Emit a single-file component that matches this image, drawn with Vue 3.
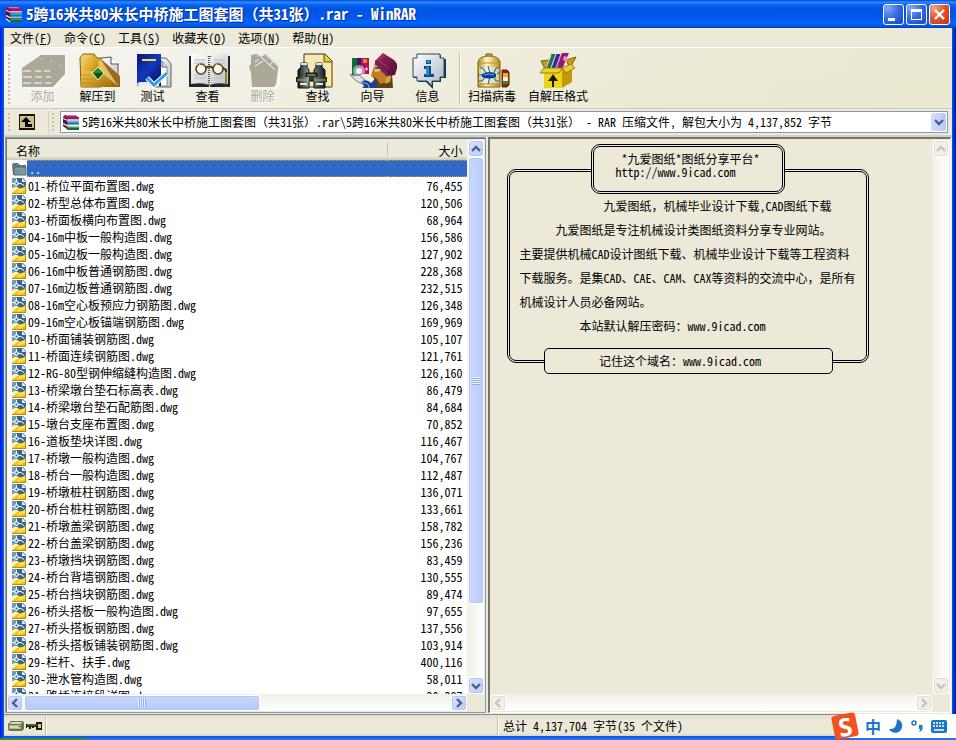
<script setup>
import { ref } from 'vue'

const menus = [
  { text: '文件', key: 'F' },
  { text: '命令', key: 'C' },
  { text: '工具', key: 'S' },
  { text: '收藏夹', key: 'O' },
  { text: '选项', key: 'N' },
  { text: '帮助', key: 'H' },
]

const files = [
  ['01-桥位平面布置图.dwg', '76,455'],
  ['02-桥型总体布置图.dwg', '120,506'],
  ['03-桥面板横向布置图.dwg', '68,964'],
  ['04-16m中板一般构造图.dwg', '156,586'],
  ['05-16m边板一般构造图.dwg', '127,902'],
  ['06-16m中板普通钢筋图.dwg', '228,368'],
  ['07-16m边板普通钢筋图.dwg', '232,515'],
  ['08-16m空心板预应力钢筋图.dwg', '126,348'],
  ['09-16m空心板锚端钢筋图.dwg', '169,969'],
  ['10-桥面铺装钢筋图.dwg', '105,107'],
  ['11-桥面连续钢筋图.dwg', '121,761'],
  ['12-RG-80型钢伸缩缝构造图.dwg', '126,160'],
  ['13-桥梁墩台垫石标高表.dwg', '86,479'],
  ['14-桥梁墩台垫石配筋图.dwg', '84,684'],
  ['15-墩台支座布置图.dwg', '70,852'],
  ['16-道板垫块详图.dwg', '116,467'],
  ['17-桥墩一般构造图.dwg', '104,767'],
  ['18-桥台一般构造图.dwg', '112,487'],
  ['19-桥墩桩柱钢筋图.dwg', '136,071'],
  ['20-桥台桩柱钢筋图.dwg', '133,661'],
  ['21-桥墩盖梁钢筋图.dwg', '158,782'],
  ['22-桥台盖梁钢筋图.dwg', '156,236'],
  ['23-桥墩挡块钢筋图.dwg', '83,459'],
  ['24-桥台背墙钢筋图.dwg', '130,555'],
  ['25-桥台挡块钢筋图.dwg', '89,474'],
  ['26-桥头搭板一般构造图.dwg', '97,655'],
  ['27-桥头搭板钢筋图.dwg', '137,556'],
  ['28-桥头搭板铺装钢筋图.dwg', '103,914'],
  ['29-栏杆、扶手.dwg', '400,116'],
  ['30-泄水管构造图.dwg', '58,011'],
  ['31-路桥连接段详图.dwg', '20,287'],
]

const selected = ref(-1)
const address = '5跨16米共80米长中桥施工图套图（共31张）.rar\\5跨16米共80米长中桥施工图套图（共31张） - RAR 压缩文件, 解包大小为 4,137,852 字节'
</script>

<template>
  <div class="desktop">
    <svg class="defs" width="0" height="0" aria-hidden="true">
      <defs>
        <linearGradient id="gold" x1="0" y1="0" x2="1" y2="1">
          <stop offset="0" stop-color="#f7e08a" /><stop offset=".45" stop-color="#dba92b" /><stop offset="1" stop-color="#8a5c06" />
        </linearGradient>
        <linearGradient id="blue" x1="0" y1="0" x2="1" y2="1">
          <stop offset="0" stop-color="#0a1470" /><stop offset=".5" stop-color="#1238c0" /><stop offset="1" stop-color="#04105c" />
        </linearGradient>
        <linearGradient id="paper" x1="0" y1="0" x2="1" y2="1">
          <stop offset="0" stop-color="#ffffff" /><stop offset="1" stop-color="#bfc2c8" />
        </linearGradient>
        <linearGradient id="barrel" x1="0" y1="0" x2="1" y2="0">
          <stop offset="0" stop-color="#0c1414" /><stop offset=".4" stop-color="#8fa5a8" /><stop offset="1" stop-color="#152020" />
        </linearGradient>
        <linearGradient id="tank" x1="0" y1="0" x2="1" y2="0">
          <stop offset="0" stop-color="#b58a10" /><stop offset=".4" stop-color="#fffac8" /><stop offset="1" stop-color="#b98b10" />
        </linearGradient>
        <linearGradient id="bubble" x1="0" y1="0" x2="1" y2="1">
          <stop offset="0" stop-color="#ffffff" /><stop offset="1" stop-color="#a9b6c4" />
        </linearGradient>
        <linearGradient id="hat" x1="0" y1="0" x2="1" y2="1">
          <stop offset="0" stop-color="#a02a62" /><stop offset="1" stop-color="#4c0a35" />
        </linearGradient>
        <symbol id="books" viewBox="0 0 16 16">
          <path d="M1 1h10l4 2v3H4L1 4z" fill="#a5125f" />
          <path d="M1 1h10l3 1H4z" fill="#e66bb0" />
          <path d="M2 4l2 1h11v1H4z" fill="#e8e8e8" />
          <path d="M1 6l3 1h11v3H4L1 9z" fill="#1572b0" />
          <path d="M4 7h11v1H4z" fill="#53c8ea" />
          <path d="M2 9l2 1h11v1H4z" fill="#e8e8e8" />
          <path d="M1 11l3 1h11v3H4l-3-2z" fill="#176a2a" />
          <path d="M4 12h11v1H4z" fill="#53b04f" />
          <path d="M0 2l4 2v11l-4-3z" fill="#5a1038" />
          <path d="M0 4l4 2M0 9l4 2M0 12l4 3" stroke="#fff" />
        </symbol>
        <symbol id="dwg" viewBox="0 0 14 16">
          <path d="M0 0h11l3 3v13H0z" fill="#39678e" />
          <path d="M0 0h5v9H0z" fill="#6f9cbc" />
          <path d="M10 0l4 4h-4z" fill="#dff0fa" />
          <path d="M0 10q4-2 7 0t7-3v9H0z" fill="#f3bf17" />
          <path d="M0 10q4-2 7 0l-3 2-4 3z" fill="#fff2b0" />
          <path d="M7 11l7-2v3l-9 3z" fill="#ffe14a" />
          <path d="M0 15h14v1H0zM13 8h1v8h-1z" fill="#c28a0a" />
          <path d="M4.500 1v7M0 5.500h9l3 2" stroke="#fff" fill="none" />
          <path d="M3 4h3v3H3z" fill="#39678e" stroke="#fff" />
        </symbol>
        <symbol id="up" viewBox="0 0 10 10"><path d="M1 7l4-4 4 4" fill="none" stroke="currentColor" stroke-width="2.4" /></symbol>
        <symbol id="down" viewBox="0 0 10 10"><path d="M1 3l4 4 4-4" fill="none" stroke="currentColor" stroke-width="2.4" /></symbol>
        <symbol id="left" viewBox="0 0 10 10"><path d="M7 1L3 5l4 4" fill="none" stroke="currentColor" stroke-width="2.4" /></symbol>
        <symbol id="right" viewBox="0 0 10 10"><path d="M3 1l4 4-4 4" fill="none" stroke="currentColor" stroke-width="2.4" /></symbol>
      </defs>
    </svg>

    <main class="window">
      <header class="titlebar">
        <svg class="app-icon" width="17" height="17"><use href="#books" /></svg>
        <h1>5跨16米共80米长中桥施工图套图（共31张）.rar - WinRAR</h1>
        <div class="caption-buttons">
          <button aria-label="最小化"><svg width="19" height="19"><path d="M4 13h7v3H4z" fill="#fff" /></svg></button>
          <button aria-label="最大化"><svg width="19" height="19"><path d="M4 4h11v11H4zM5 7v7h9V7z" fill="#fff" fill-rule="evenodd" /></svg></button>
          <button class="close" aria-label="关闭"><svg width="19" height="19"><path d="M5 5l9 9M14 5l-9 9" stroke="#fff" stroke-width="2.4" /></svg></button>
        </div>
      </header>

      <nav class="menubar">
        <button v-for="m in menus" :key="m.key">{{ m.text }}(<u>{{ m.key }}</u>)</button>
      </nav>

      <div class="toolbar">
        <span class="grip"></span>
        <button class="tool" disabled>
          <svg width="48" height="36" viewBox="0 0 48 36">
            <path d="M4 35h31l12-13V3" fill="none" stroke="#fff" />
            <path d="M3 15L22 2h24v19L34 34H3z" fill="#aca899" />
            <path d="M4 18h8M16 18h6M25 18h6M4 24h9M16 24h7M27 24h5M4 30h8M15 30h8M26 30h6" stroke="#fff" />
            <path d="M22 6h1M32 8h1M41 13h1" stroke="#fff" />
          </svg>
          <span>添加</span>
        </button>
        <button class="tool">
          <svg width="48" height="36" viewBox="0 0 48 36">
            <path d="M27 5l10-1 7 7v21H27z" fill="url(#paper)" stroke="#555" />
            <path d="M37 4v7h8" fill="#fff" stroke="#555" />
            <path d="M6 5l3-4h11l3 4h4v29H7z" fill="url(#gold)" stroke="#8a5c06" />
            <path d="M24 7L46 25v9H7V18h17z" fill="url(#gold)" />
            <path d="M26 5L46 23 45 34 29 18z" fill="#9a6b1a" />
            <path d="M26 5v13l18 15z" fill="#f0d283" opacity=".8" />
            <path d="M7 22h10M7 26h15M7 30h24" stroke="#c08a1c" opacity=".7" />
            <path d="M24 14l6 6-6 7-6-7z" fill="#2d8f2a" stroke="#f2f0b8" />
            <path d="M20 20h9l-5 6z" fill="#0c5313" />
          </svg>
          <span>解压到</span>
        </button>
        <button class="tool">
          <svg width="48" height="36" viewBox="0 0 48 36">
            <path d="M25 5h12l5 6v23H25z" fill="url(#paper)" stroke="#666" />
            <path d="M24 8h9l5 6v19H24z" fill="#fff" stroke="#8a8a8a" />
            <path d="M33 8v6h5" fill="#d5d8de" stroke="#666" />
            <path d="M8 1h24v32H10q-2 0-2-2z" fill="url(#blue)" />
            <path d="M8 31q1-2 4-2h18v4H10z" fill="#e8ebf2" />
            <path d="M8 1h24v28H8z" fill="url(#blue)" />
            <path d="M13 7h14" stroke="#f2dc3a" stroke-width="2" />
            <path d="M18 25l7 7 13-12" fill="none" stroke="#fff" stroke-width="5" />
            <path d="M18 25l7 7 13-12" fill="none" stroke="#2b9be8" stroke-width="3" />
          </svg>
          <span>测试</span>
        </button>
        <button class="tool">
          <svg width="48" height="36" viewBox="0 0 48 36">
            <path d="M5 3h20v31H5zM26 3h20v31H26z" fill="#262626" />
            <path d="M7 1q12-1 18 3v28q-6-3-18-1zM44 1q-12-1-18 3v28q6-3 18-1z" fill="url(#paper)" />
            <path d="M25 3v30" stroke="#555" stroke-dasharray="1 1" stroke-width="2" />
            <path d="M10 7h11M10 10h11M30 7h11M30 10h11M10 22h11M30 22h9M10 25h11M30 25h9" stroke="#b8b8bc" />
            <circle cx="17" cy="16" r="5" fill="#f7f7f7" stroke="#5b4508" stroke-width="1.600" />
            <circle cx="34" cy="16" r="5" fill="#f7f7f7" stroke="#5b4508" stroke-width="1.600" />
            <path d="M22 15q3-3 7 0M39 15l3 2v17" fill="none" stroke="#4b3604" stroke-width="2" />
            <path d="M14 13l2-2M31 13l2-2M42 19v12" stroke="#ecc94a" />
          </svg>
          <span>查看</span>
        </button>
        <button class="tool" disabled>
          <svg width="48" height="36" viewBox="0 0 48 36">
            <path d="M38 35H13M40 16v16l-3 3" stroke="#fff" fill="none" />
            <path d="M10 14l2-3V2l6-1 4 3 5-3 12 11v5l-2 14-2 3H13l-1-14z" fill="#aca899" />
            <path d="M22 4l14 13M27 2l12 11M16 9l4-3M16 13l8-5M18 3h1M31 12l3-4" stroke="#fff" />
          </svg>
          <span>删除</span>
        </button>
        <button class="tool">
          <svg width="48" height="36" viewBox="0 0 48 36">
            <path d="M10 1h21l7 7v26H10z" fill="#f8e8b8" stroke="#3a3016" />
            <path d="M30 1v8h8" fill="#e6cf1d" stroke="#5a4a10" />
            <path d="M38 34V13" stroke="#b79338" stroke-width="2" />
            <path d="M7 10h6v4l2 3v18H4V17l3-3zM22 10h6v4l3 3v18H20V17l2-3z" fill="url(#barrel)" stroke="#0b0f0f" />
            <path d="M12 20h11v8H12z" fill="#26393b" stroke="#0b0f0f" />
            <path d="M2 24h13v5H2zM20 24h13v5H20z" fill="url(#barrel)" />
            <path d="M3 27h12M20 27h12M13 22h8" stroke="#d8aa24" />
            <path d="M7 11h6M22 11h6M6 31h7M22 31h7" stroke="#dfe8e8" stroke-width="2" />
          </svg>
          <span>查找</span>
        </button>
        <button class="tool">
          <svg width="48" height="36" viewBox="0 0 48 36">
            <path d="M3 5h6v17H3z" fill="#106c38" /><path d="M8 5h5v17H8z" fill="#4a1072" /><path d="M12 5h8v16h-8z" fill="#b51252" />
            <path d="M14 6h4v4h-4z" fill="#dc8a28" />
            <circle cx="10" cy="18" r="6" fill="#fff" opacity=".5" />
            <circle cx="10" cy="18" r="3" fill="#fff" opacity=".9" />
            <path d="M16 16h3M17.500 14.500v3" stroke="#fff" />
            <path d="M1 21q4 3 9 1l6 5-2 4Q5 28 1 21z" fill="#e3e3e6" stroke="#777" />
            <path d="M12 29q5-4 10 1l5-5 9 4 6-3v9H13q4-2-1-6z" fill="#1c3f94" />
            <path d="M12 29l7 2 1 4" fill="none" stroke="#7fb6e8" />
            <path d="M26 10l6 1 7 9-2 11-8 2-3-7-4-3 1-4z" fill="#c57b28" />
            <path d="M25 13l6-1v6l-5 1z" fill="#f4c377" />
            <path d="M26 15h4" stroke="#1b66a8" stroke-width="2" />
            <path d="M24 23l4 3 3 5 7-2 5-8 1 14H29z" fill="#5c4318" />
            <path d="M38 21l4 3-1 5-5 2z" fill="#d7a333" />
            <path d="M26 8l8-8 11 7 4 5-3 10-7 1z" fill="url(#hat)" />
            <path d="M26 7l14 15-2 2-12-13z" fill="#7a2450" />
            <path d="M35 2l-5 5 10 9" stroke="#b5407a" fill="none" />
            <path d="M12 2h1M18 1h1M7 3h1M22 4h1" stroke="#fff" />
          </svg>
          <span>向导</span>
        </button>
        <button class="tool">
          <svg width="48" height="36" viewBox="0 0 48 36">
            <path d="M14 2h23v4h5v19h-5v4h-8v7l-7-7h-8v-4H9V6h5z" fill="#15384c" />
            <path d="M13 1h23v4h4v19h-4v4h-8v5l-5-5H13v-4H9V5h4z" fill="url(#bubble)" stroke="#244a5e" />
            <path d="M22 7h5v4h-5zM20 13h7v8h3v3H20v-3h2v-5h-2z" fill="#0b4f82" />
            <path d="M23 7h3v3h-3zM22 14h3v8h-3z" fill="#2491cf" />
          </svg>
          <span>信息</span>
        </button>
        <span class="divider"></span>
        <button class="tool wide">
          <svg width="48" height="36" viewBox="0 0 48 36">
            <path d="M18 3V1h6v2" fill="#e5c444" stroke="#6b5008" />
            <path d="M10 34V9q1-6 11-6t11 6v25z" fill="url(#tank)" stroke="#7c5e0a" />
            <path d="M11 14h20v16H11z" fill="#e2eef2" opacity=".6" />
            <path d="M10 10h22M10 31h22" stroke="#c0921c" />
            <path d="M18 20l-3-5h-3M22 20l-2-7M26 20l2-5h3M18 23l-4 5h-3M22 24l-2 7M26 24l2 4h3M14 22h-4M29 21l3-2" stroke="#1a56a8" fill="none" />
            <path d="M14 21q8-4 14 0v3q-7 3-14 0z" fill="#0b3b94" />
            <path d="M16 22q5-2 10 0" stroke="#5eb4f4" fill="none" />
            <path d="M34 17h5l2 2v13l-2 2h-5z" fill="#941c12" stroke="#5a3208" />
            <path d="M35 20h5v4h-5z" fill="#f1a23b" /><path d="M35 24h5v4h-5z" fill="#fff7d8" /><path d="M35 28h5v3h-5z" fill="#3d862d" />
          </svg>
          <span>扫描病毒</span>
        </button>
        <button class="tool wide">
          <svg width="48" height="36" viewBox="0 0 48 36">
            <path d="M7 8l8-1-4 9zM32 7l10-3-6 11z" fill="#c79b13" stroke="#7e6208" />
            <path d="M17 1h6l-5 15h-6z" fill="#197b44" /><path d="M22 1h6l-5 15h-6z" fill="#45249b" /><path d="M28 0h7l-6 16h-6z" fill="#98186e" />
            <path d="M17 2l-5 13M22 1l-5 14M27 1l-5 14M35 1l-6 14" stroke="#f7d7ee" />
            <path d="M30 3l3 1-2 4-2-1z" fill="#ed9ccf" />
            <path d="M10 16h18v19H10z" fill="#ecd516" /><path d="M28 16l10-4v17l-10 6z" fill="#c29a08" />
            <path d="M10 15h18l-3 5H6zM28 15l9-4 4 4-9 5z" fill="#e8cf35" stroke="#9f7e08" />
            <path d="M19 34v-8M16 27l3-4 3 4z" stroke="#1e1600" stroke-width="2" fill="#1e1600" />
          </svg>
          <span>自解压格式</span>
        </button>
      </div>

      <div class="addressbar">
        <span class="grip"></span>
        <button class="up-button" aria-label="上一级">
          <svg width="16" height="16" viewBox="0 0 16 16">
            <rect width="16" height="16" fill="#17150a" /><rect x="1" y="2" width="14" height="12" fill="#c9c38b" />
            <path d="M2 8l5-5 5 5H9v2h4v3H6V8z" fill="#000" />
          </svg>
        </button>
        <span class="grip second"></span>
        <div class="combo">
          <svg width="17" height="17" aria-hidden="true"><use href="#books" /></svg>
          <select aria-label="地址"><option>{{ address }}</option></select>
          <span class="drop" aria-hidden="true"><svg width="10" height="10"><use href="#down" /></svg></span>
        </div>
      </div>

      <div class="panes">
        <section class="pane list-pane">
          <div class="viewport">
            <table>
              <thead>
                <tr><th class="name" scope="col">名称</th><th class="size" scope="col">大小</th></tr>
              </thead>
              <tbody>
                <tr :class="{ selected: selected === -1 }" @click="selected = -1">
                  <td><div class="cell">
                    <svg width="15" height="14" viewBox="0 0 15 14">
                      <path d="M0 3l1-2h5l2 2h6v10H1z" fill="#68757a" /><path d="M2 5h12v8H2z" fill="#849b9b" stroke="#57646d" /><path d="M3 7h8v5H3z" fill="#7593a5" />
                    </svg>
                    <span>..</span></div></td>
                  <td class="size"></td>
                </tr>
                <tr v-for="(f, i) in files" :key="f[0]" :class="{ selected: selected === i }" @click="selected = i">
                  <td><div class="cell"><svg width="14" height="16"><use href="#dwg" /></svg><span>{{ f[0] }}</span></div></td>
                  <td class="size">{{ f[1] }}</td>
                </tr>
              </tbody>
            </table>
          </div>
          <div class="scroll vertical">
            <button aria-label="向上"><svg width="10" height="10"><use href="#up" /></svg></button>
            <div class="track"><div class="thumb"><i></i></div></div>
            <button aria-label="向下"><svg width="10" height="10"><use href="#down" /></svg></button>
          </div>
          <div class="scroll horizontal">
            <button aria-label="向左"><svg width="10" height="10"><use href="#left" /></svg></button>
            <div class="track"><div class="thumb"><i></i></div></div>
            <button aria-label="向右"><svg width="10" height="10"><use href="#right" /></svg></button>
          </div>
        </section>

        <section class="pane note-pane">
          <div class="viewport">
            <article class="note">
              <header class="note-head">
                <p class="site">*九爱图纸*图纸分享平台*</p>
                <p>http://www.9icad.com</p>
              </header>
              <div class="note-body">
                <p class="in7">九爱图纸，机械毕业设计下载,CAD图纸下载</p>
                <p class="in3">九爱图纸是专注机械设计类图纸资料分享专业网站。</p>
                <p>主要提供机械CAD设计图纸下载、机械毕业设计下载等工程资料</p>
                <p>下载服务。是集CAD、CAE、CAM、CAX等资料的交流中心，是所有</p>
                <p>机械设计人员必备网站。</p>
                <p class="in5">本站默认解压密码：www.9icad.com</p>
              </div>
              <footer class="note-foot">记住这个域名：www.9icad.com</footer>
            </article>
          </div>
          <div class="scroll vertical off">
            <button disabled aria-label="向上"><svg width="10" height="10"><use href="#up" /></svg></button>
            <div class="track"></div>
            <button disabled aria-label="向下"><svg width="10" height="10"><use href="#down" /></svg></button>
          </div>
          <div class="scroll horizontal off">
            <button disabled aria-label="向左"><svg width="10" height="10"><use href="#left" /></svg></button>
            <div class="track"></div>
            <button disabled aria-label="向右"><svg width="10" height="10"><use href="#right" /></svg></button>
          </div>
        </section>
      </div>

      <footer class="status">
        <div class="status-left">
          <svg width="16" height="12" viewBox="0 0 16 12">
            <path d="M0 4l3-3h12l1 2v6l-2 2H1L0 9z" fill="#6f7448" /><path d="M1 4l3-2h10l-1 2z" fill="#d8dcb6" /><path d="M1 5h12v4H1z" fill="#b0b58a" /><path d="M2 7h9" stroke="#fff" /><path d="M10 6h3v1h-3z" fill="#18b070" />
          </svg>
          <svg width="17" height="10" viewBox="0 0 17 10">
            <path d="M0 3h10V1h6v8h-6V6H8v1H6V6H5v2H3V6H1v1H0z" fill="#1d190c" /><path d="M12 3h3v4h-3z" fill="#d3cc8c" /><path d="M1 4h10" stroke="#9a9254" />
          </svg>
          <span class="divider"></span>
        </div>
        <div class="status-right">总计 4,137,704 字节(35 个文件)</div>
      </footer>
    </main>

    <div class="taskbar"><span class="start"></span></div>

    <aside class="ime" aria-label="输入法">
      <span class="logo">S</span>
      <b>中</b>
      <svg width="14" height="14" viewBox="0 0 14 14"><path d="M8 0a7 7 0 1 1-8 10Q8 11 8 0z" fill="#1c76c8" /></svg>
      <svg width="12" height="12" viewBox="0 0 12 12"><circle cx="3" cy="3" r="2" fill="none" stroke="#1c76c8" stroke-width="1.5" /><path d="M8 5h3.500v4q-1 2.500-3 3V10.500L9.500 9H8z" fill="#1c76c8" /></svg>
      <svg width="16" height="13" viewBox="0 0 16 13"><rect width="16" height="13" rx="2" fill="#1c76c8" /><path d="M2 3h12M2 6h12" stroke="#fff" stroke-width="1.500" stroke-dasharray="2 1" /><path d="M3 10h10" stroke="#fff" stroke-width="1.500" /></svg>
    </aside>
  </div>
</template>

<style>
body {
  margin: 0;
  overflow: hidden;
}
</style>

<style scoped>
* {
  box-sizing: border-box;
}
.desktop {
  position: relative;
  display: flex;
  flex-direction: column;
  height: 100vh;
  background: #0a46d8;
  color: #000;
  font: 12px/16px "Noto Sans Mono CJK SC", "Noto Sans CJK SC", monospace;
  white-space: nowrap;
}
.defs {
  position: absolute;
}
button {
  margin: 0;
  padding: 0;
  border: 0;
  background: none;
  color: inherit;
  font: inherit;
}
p, h1 {
  margin: 0;
}
svg {
  flex: none;
  display: block;
}
.window {
  flex: 1;
  min-height: 0;
  display: flex;
  flex-direction: column;
  padding: 0 4px 2px;
  background: linear-gradient(90deg, #0019cf, #0a5cf0 4px, #0a5cf0 calc(100% - 4px), #0044e8 calc(100% - 3px), #00138c);
}

/* Title bar */
.titlebar {
  display: flex;
  flex: none;
  align-items: center;
  gap: 3px;
  height: 28px;
  margin: 0 -4px;
  padding: 0 6px;
  background: linear-gradient(#0a3fd0, #2b8cff 2px, #0562f4 5px, #0054e3 9px, #0057ea 17px, #0366fd 23px, #0056ea 26px, #0038b8);
}
.titlebar h1 {
  flex: 1;
  overflow: hidden;
  font-size: 15px;
  line-height: 20px;
  color: #fff;
  text-shadow: 1px 1px #0a2a80;
}
.caption-buttons {
  display: flex;
  gap: 2px;
}
.caption-buttons button {
  width: 21px;
  height: 21px;
  border: 1px solid #fff;
  border-radius: 3px;
  background: radial-gradient(circle at 20% 15%, #88a9f5, #3468e4 50%, #1648cc);
}
.caption-buttons .close {
  background: radial-gradient(circle at 20% 15%, #f2a488, #e0532b 50%, #c0350c);
}

/* Menu bar */
.menubar {
  display: flex;
  flex: none;
  height: 20px;
  border-bottom: 1px solid #fff;
  background: #ece9d8;
}
.menubar button {
  padding: 0 6px;
  line-height: 19px;
}
.grip {
  flex: none;
  width: 2px;
  margin: 2px 0 2px 4px;
  background: repeating-linear-gradient(#c2bfae 0 2px, transparent 2px 4px);
}

/* Toolbar */
.toolbar {
  display: flex;
  flex: none;
  height: 61px;
  padding: 4px 0 2px;
  border-bottom: 1px solid #cfcbb8;
  background: linear-gradient(170deg, rgba(255, 255, 255, 0), #ece9d0), linear-gradient(90deg, #f6f6f4, #ece9d8);
}
.toolbar .grip {
  margin-right: 5px;
}
.tool {
  flex: none;
  display: flex;
  flex-direction: column;
  align-items: center;
  width: 55px;
}
.tool svg {
  margin-top: 1px;
}
.tool span {
  line-height: 14px;
}
.tool.wide {
  width: 66px;
}
.tool:disabled {
  color: #aca899;
  text-shadow: 1px 1px #fff;
}
.divider {
  width: 2px;
  border-left: 1px solid #c5c2b0;
  border-right: 1px solid #fff;
}
.toolbar .divider {
  margin: 0 -2px 2px 4px;
}

/* Address bar */
.addressbar {
  display: flex;
  flex: none;
  align-items: stretch;
  height: 28px;
  padding: 2px 4px 2px 0;
  border-bottom: 2px solid #d3d0c0;
  background: #ece9d8;
}
.up-button {
  display: flex;
  align-items: center;
  width: 39px;
  padding-left: 9px;
  border-right: 1px solid #d3d0c0;
}
.grip.second {
  margin-left: 3px;
  margin-right: 6px;
}
.combo {
  flex: 1;
  min-width: 0;
  display: flex;
  align-items: center;
  padding: 0 1px 0 2px;
  border: 1px solid #7f9db9;
  background: #fff;
}
.combo select {
  flex: 1;
  min-width: 0;
  padding: 0 0 0 2px;
  border: 0;
  appearance: none;
  background: none;
  color: inherit;
  font: inherit;
}
.drop {
  display: grid;
  place-items: center;
  width: 15px;
  height: 18px;
  border-radius: 2px;
  background: linear-gradient(90deg, #d2defd, #b5c8f6);
  color: #4d6185;
}

/* Panes */
.panes {
  flex: 1;
  min-height: 0;
  display: grid;
  grid-template: minmax(0, 1fr) / minmax(0, 51fr) minmax(0, 49fr);
  gap: 2px;
  padding: 0 1px 1px;
  background: #ece9d8;
}
.pane {
  display: grid;
  grid-template: minmax(0, 1fr) 17px / minmax(0, 1fr) 17px;
  background: #ece9d8;
}
.list-pane {
  border: 1px solid #7f9db9;
  box-shadow: inset 1px 1px #77756a;
  padding: 2px 1px 1px 1px;
}
.note-pane {
  border: 1px solid #fff;
  border-top: 2px solid #77756a;
  border-left: 2px solid #77756a;
  padding: 1px 1px 1px 0;
}
.viewport {
  overflow: hidden;
}
.list-pane .viewport {
  background: #fff;
}
table {
  width: 100%;
  border-collapse: separate;
  border-spacing: 0;
  table-layout: fixed;
}
th {
  height: 20px;
  padding: 0 0 0 9px;
  font-weight: normal;
  text-align: left;
  line-height: 17px;
  background: linear-gradient(#ebeadb 16px, #ddd9c6 18px, #cbc7b8);
}
th.size {
  background: linear-gradient(#c7c5b2, #c7c5b2) 0 2px / 1px 14px no-repeat, linear-gradient(#ebeadb 16px, #ddd9c6 18px, #cbc7b8);
}
td {
  height: 17px;
  padding: 0;
  line-height: 17px;
}
.size {
  width: 80px;
  padding-right: 5px;
  text-align: right;
}
.cell {
  display: flex;
  align-items: center;
  height: 17px;
  padding-left: 5px;
}
.cell span {
  flex: 1;
  padding-left: 2px;
}
.selected {
  color: #fff;
}
.selected .cell span,
.selected .size {
  height: 17px;
  border: 0 dotted #d89a3c;
  border-width: 1px 0;
  line-height: 15px;
  background-color: #316ac5;
}

/* Scroll bars */
.scroll {
  display: flex;
}
.scroll.vertical {
  flex-direction: column;
  padding-left: 1px;
  background: linear-gradient(90deg, #f0efe8, #fff);
}
.scroll.horizontal {
  padding-top: 1px;
  background: linear-gradient(#f0efe8, #fff);
}
.scroll button,
.thumb {
  display: grid;
  place-items: center;
  border: 1px solid #fff;
  border-radius: 3px;
  box-shadow: inset 0 0 0 1px #b3c7f5;
  background: linear-gradient(135deg, #d8e3ff, #b9cdfb);
  color: #4d6185;
}
.scroll button {
  flex: none;
  width: 16px;
  height: 17px;
}
.scroll.horizontal button {
  height: 16px;
}
.track {
  flex: 1;
  min-width: 0;
  min-height: 0;
}
.vertical .thumb {
  height: 86%;
  background: linear-gradient(90deg, #c9d8fd, #bacbfa);
}
.horizontal .thumb {
  width: 55%;
  height: 16px;
  margin-left: 1px;
  background: linear-gradient(#c9d8fd, #b5c8f8);
}
.thumb i {
  width: 8px;
  height: 8px;
  background: repeating-linear-gradient(90deg, #eef3ff 0 1px, #8cb0f8 1px 2px);
}
.vertical .thumb i {
  background: repeating-linear-gradient(#eef3ff 0 1px, #8cb0f8 1px 2px);
}
.scroll.off button {
  box-shadow: inset 0 0 0 1px #e2e0d2;
  background: #f1f0e8;
  color: #c6c4b4;
}

/* Archive comment */
.note {
  width: 362px;
  margin: 29px 0 0 17px;
  border: 3px double #000;
  border-radius: 9px;
}
.note-head {
  width: 194px;
  height: 50px;
  margin: -28px auto 0;
  padding: 5px 0 0 21px;
  border: 3px double #000;
  border-radius: 9px;
  background: #ece9d8;
  line-height: 13px;
}
.site {
  text-indent: 6px;
}
.note-body {
  padding-left: 9px;
  line-height: 24px;
}
.in3 { text-indent: 3em; }
.in5 { text-indent: 5em; }
.in7 { text-indent: 7em; }
.note-foot {
  width: 289px;
  margin: 10px auto -14px;
  padding-left: 54px;
  border: 1px solid #000;
  border-radius: 5px;
  background: #ece9d8;
  line-height: 24px;
}

/* Status bar */
.status {
  flex: none;
  display: grid;
  grid-template-columns: minmax(0, 52fr) minmax(0, 48fr);
  height: 22px;
  padding: 1px 0;
  border-top: 1px solid #8f8c7d;
  background: linear-gradient(#dedbcb, #ece9d8 5px, #ece9d8 18px, #d8d4c0);
  line-height: 20px;
}
.status-left {
  display: flex;
  align-items: center;
  gap: 2px;
  padding-left: 4px;
}
.status-left .divider {
  align-self: stretch;
}
.status-right {
  padding-left: 5px;
  border-left: 1px solid #c5c2b0;
  box-shadow: inset 1px 0 #fff;
}
.taskbar {
  flex: none;
  height: 2px;
  background: #2f6fe4;
}
.start {
  display: block;
  width: 87px;
  height: 2px;
  background: #3c8a3c;
}

/* Floating input-method bar */
.ime {
  position: absolute;
  right: 0;
  bottom: 2px;
  display: flex;
  align-items: center;
  gap: 8px;
  width: 124px;
  height: 24px;
  background: linear-gradient(90deg, transparent 14px, #fff 14px);
  color: #1c76c8;
}
.ime b {
  font-size: 16px;
  line-height: 24px;
}
.logo {
  width: 24px;
  height: 24px;
  margin: 0 0 0 1px;
  border-radius: 3px;
  background: #f4511e;
  color: #fff;
  font: bold 25px/24px "Open Sans", sans-serif;
  text-align: center;
  transform: rotate(-11deg);
}
</style>
